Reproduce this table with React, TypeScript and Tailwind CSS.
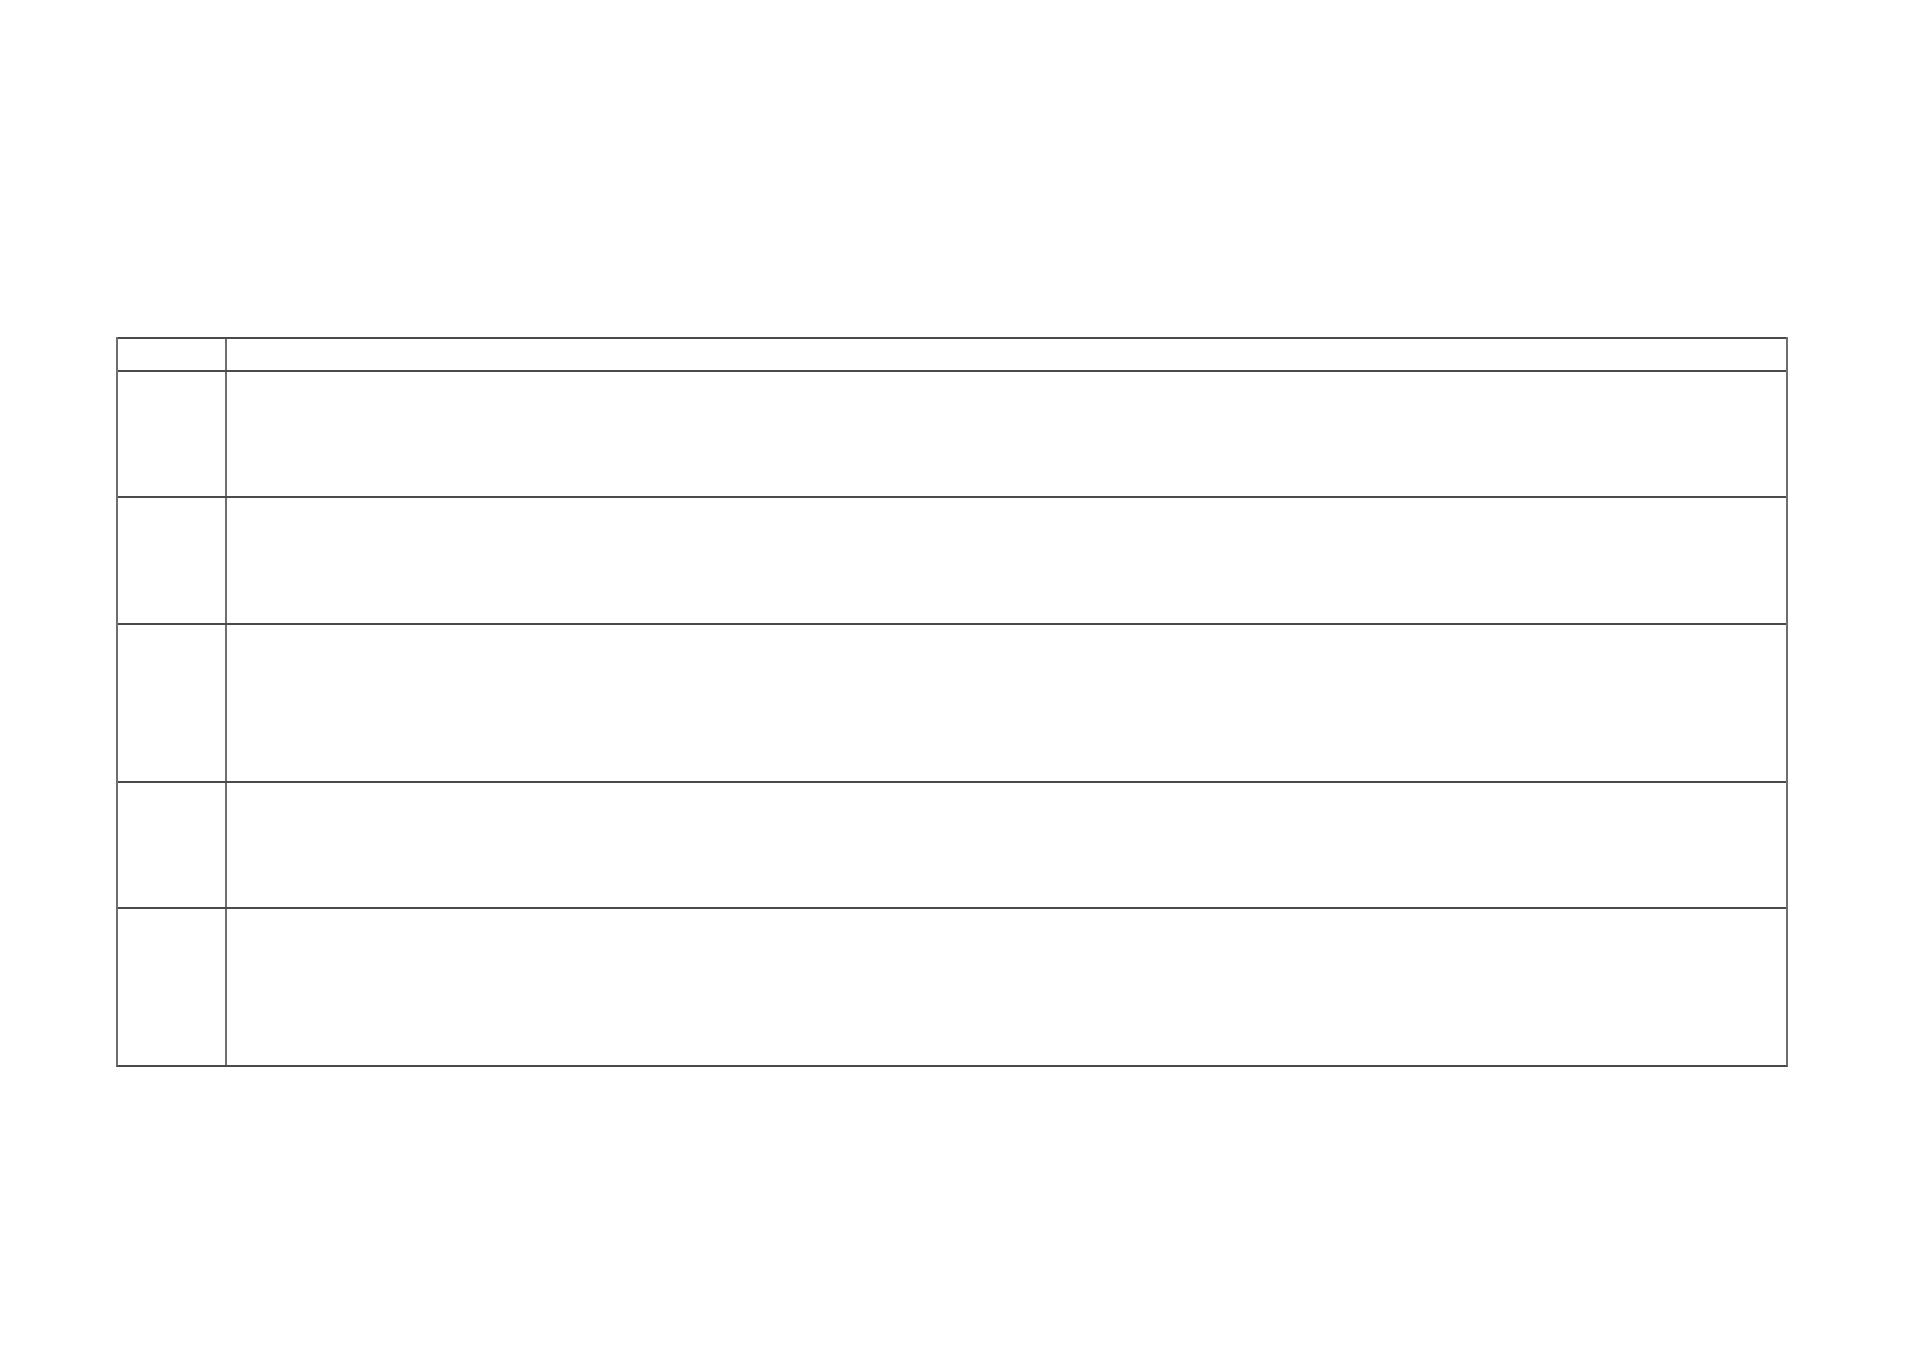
const rows = ["h-[126px]", "h-[127px]", "h-[158px]", "h-[126px]", "h-[158px]"];

export default function App() {
  return (
    <div className="min-h-[1351px] w-full bg-white pt-[337px] pl-[116px]">
      <div className="w-[1672px] border-x-2 border-x-[#6e6e6e] border-b-2 border-b-[#4a4a4a] flex flex-col">
        <div className="h-[33px] border-t-2 border-t-[#4a4a4a] flex">
          <div className="w-[107px]" />
          <div className="flex-1 border-l-2 border-l-[#6e6e6e]" />
        </div>
        {rows.map((h, i) => (
          <div key={i} className={`${h} border-t-2 border-t-[#4a4a4a] flex`}>
            <div className="w-[107px]" />
            <div className="flex-1 border-l-2 border-l-[#6e6e6e]" />
          </div>
        ))}
      </div>
    </div>
  );
}
